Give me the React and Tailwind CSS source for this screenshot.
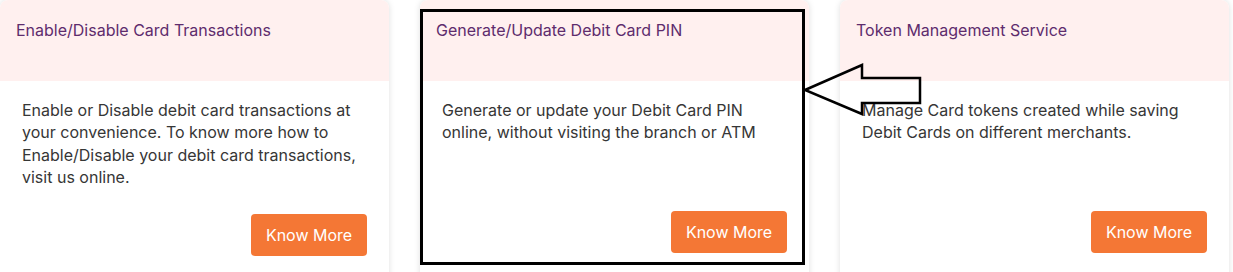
const cards = [
  {
    id: 1,
    title: 'Enable/Disable Card Transactions',
    body: 'Enable or Disable debit card transactions at your convenience. To know more how to Enable/Disable your debit card transactions, visit us online.',
  },
  {
    id: 2,
    title: 'Generate/Update Debit Card PIN',
    body: 'Generate or update your Debit Card PIN online, without visiting the branch or ATM',
  },
  {
    id: 3,
    title: 'Token Management Service',
    body: 'Manage Card tokens created while saving Debit Cards on different merchants.',
  },
];

function ServiceCard({ title, body }) {
  return (
    <div className="w-[389px] h-[300px] shrink-0 bg-white rounded-t-lg overflow-hidden shadow-[0_0_6px_rgba(0,0,0,0.13)]">
      <div className="h-[81px] bg-[#fff0ef] pl-4 pt-[19px]">
        <h3 className="text-[16px] leading-[22px] text-[#5e2c6d]">{title}</h3>
      </div>
      <div className="px-[22px] pt-[18px]">
        <p className="min-h-[86px] text-[16px] leading-[22.3px] text-[#363636]">{body}</p>
        <div className="flex justify-end mt-[26px]">
          <button className="w-[116px] h-[42px] rounded-[4px] bg-[#f47735] text-white text-[16px]">Know More</button>
        </div>
      </div>
    </div>
  );
}

export default function App() {
  return (
    <div className="relative h-[272px] overflow-hidden bg-white" style={{ fontFamily: 'Inter, "Noto Sans", sans-serif' }}>
      <div className="flex gap-[31px]">
        {cards.map(card => (
          <ServiceCard key={card.id} title={card.title} body={card.body} />
        ))}
      </div>

      {/* annotation: highlight box + arrow */}
      <div className="absolute left-[420px] top-[9px] w-[385px] h-[256px] border-[3px] border-black pointer-events-none" />
      <svg className="absolute left-0 top-0 pointer-events-none" width="1233" height="272">
        <polygon
          points="805,90 862,65 862,78 920,78 920,103 862,103 862,114"
          fill="none"
          stroke="black"
          strokeWidth="2.5"
          strokeLinejoin="miter"
        />
      </svg>
    </div>
  );
}
